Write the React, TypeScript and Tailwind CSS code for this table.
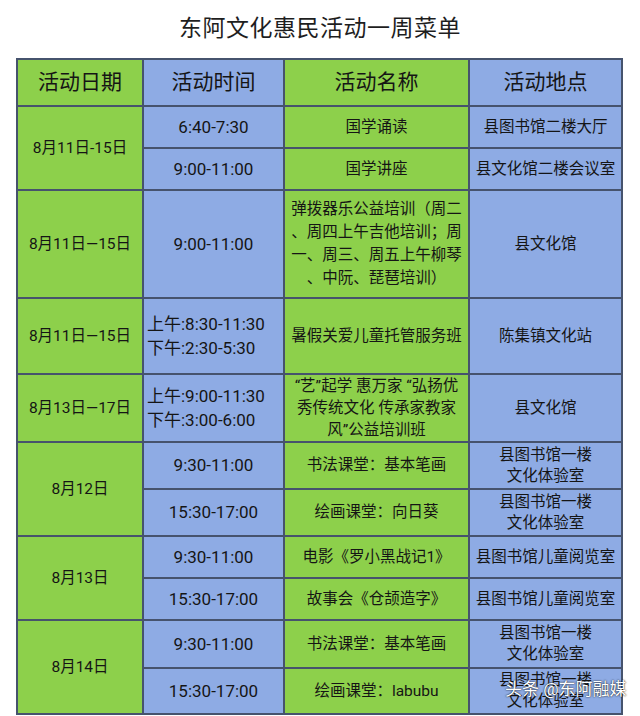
import React from "react";

const G = "bg-[#8dd04b]";
const B = "bg-[#8eabe4]";
const cell = "border-[2px] border-[#46536d] text-center align-middle p-0 text-[15.5px] leading-[23px] text-[#151515]";
const time = "text-[17px]";

function Lines({ lines }: { lines: string[] }) {
  return (
    <>
      {lines.map((l, i) => (
        <span key={i} className="block whitespace-nowrap">
          {l}
        </span>
      ))}
    </>
  );
}

export default function App() {
  return (
    <div
      className="relative w-[640px] h-[716px] bg-white overflow-hidden"
      style={{ fontFamily: "Roboto, 'Noto Sans CJK SC', sans-serif" }}
    >
      <div className="h-[58px] flex items-center justify-center pb-[2px]">
        <h1 className="text-[23px] leading-none text-[#1e1e1e] font-normal tracking-[0.5px]">
          东阿文化惠民活动一周菜单
        </h1>
      </div>
      <table className="ml-[16px] w-[605px] table-fixed border-collapse">
        <colgroup>
          <col className="w-[126px]" />
          <col className="w-[141px]" />
          <col className="w-[185px]" />
          <col className="w-[153px]" />
        </colgroup>
        <tbody>
          <tr className="h-[47px]">
            <td className={`${cell} ${G} !text-[21px]`}>活动日期</td>
            <td className={`${cell} ${B} !text-[21px]`}>活动时间</td>
            <td className={`${cell} ${G} !text-[21px]`}>活动名称</td>
            <td className={`${cell} ${B} !text-[21px]`}>活动地点</td>
          </tr>
          <tr className="h-[42px]">
            <td className={`${cell} ${G}`} rowSpan={2}>8月11日-15日</td>
            <td className={`${cell} ${B} ${time}`}>6:40-7:30</td>
            <td className={`${cell} ${G}`}>国学诵读</td>
            <td className={`${cell} ${B}`}>县图书馆二楼大厅</td>
          </tr>
          <tr className="h-[42px]">
            <td className={`${cell} ${B} ${time}`}>9:00-11:00</td>
            <td className={`${cell} ${G}`}>国学讲座</td>
            <td className={`${cell} ${B}`}>县文化馆二楼会议室</td>
          </tr>
          <tr className="h-[108px]">
            <td className={`${cell} ${G}`}>8月11日—15日</td>
            <td className={`${cell} ${B} ${time}`}>9:00-11:00</td>
            <td className={`${cell} ${G}`}>
              <Lines
                lines={[
                  "弹拨器乐公益培训（周二",
                  "、周四上午吉他培训；周",
                  "一、周三、周五上午柳琴",
                  "、中阮、琵琶培训）",
                ]}
              />
            </td>
            <td className={`${cell} ${B}`}>县文化馆</td>
          </tr>
          <tr className="h-[76px]">
            <td className={`${cell} ${G}`}>8月11日—15日</td>
            <td className={`${cell} ${B} !text-left pl-[3px] ${time} !leading-[24px]`}>
              <Lines lines={["上午:8:30-11:30", "下午:2:30-5:30"]} />
            </td>
            <td className={`${cell} ${G}`}>暑假关爱儿童托管服务班</td>
            <td className={`${cell} ${B}`}>陈集镇文化站</td>
          </tr>
          <tr className="h-[68px]">
            <td className={`${cell} ${G}`}>8月13日—17日</td>
            <td className={`${cell} ${B} !text-left pl-[3px] ${time} !leading-[24px]`}>
              <Lines lines={["上午:9:00-11:30", "下午:3:00-6:00"]} />
            </td>
            <td className={`${cell} ${G} !leading-[22px]`}>
              <Lines lines={["“艺”起学 惠万家 “弘扬优", "秀传统文化 传承家教家", "风”公益培训班"]} />
            </td>
            <td className={`${cell} ${B}`}>县文化馆</td>
          </tr>
          <tr className="h-[47px]">
            <td className={`${cell} ${G}`} rowSpan={2}>8月12日</td>
            <td className={`${cell} ${B} ${time}`}>9:30-11:00</td>
            <td className={`${cell} ${G}`}>书法课堂：基本笔画</td>
            <td className={`${cell} ${B} !leading-[21px]`}>
              <Lines lines={["县图书馆一楼", "文化体验室"]} />
            </td>
          </tr>
          <tr className="h-[47px]">
            <td className={`${cell} ${B} ${time}`}>15:30-17:00</td>
            <td className={`${cell} ${G}`}>绘画课堂：向日葵</td>
            <td className={`${cell} ${B} !leading-[21px]`}>
              <Lines lines={["县图书馆一楼", "文化体验室"]} />
            </td>
          </tr>
          <tr className="h-[42px]">
            <td className={`${cell} ${G}`} rowSpan={2}>8月13日</td>
            <td className={`${cell} ${B} ${time}`}>9:30-11:00</td>
            <td className={`${cell} ${G}`}>电影《罗小黑战记1》</td>
            <td className={`${cell} ${B}`}>县图书馆儿童阅览室</td>
          </tr>
          <tr className="h-[42px]">
            <td className={`${cell} ${B} ${time}`}>15:30-17:00</td>
            <td className={`${cell} ${G}`}>故事会《仓颉造字》</td>
            <td className={`${cell} ${B}`}>县图书馆儿童阅览室</td>
          </tr>
          <tr className="h-[48px]">
            <td className={`${cell} ${G}`} rowSpan={2}>8月14日</td>
            <td className={`${cell} ${B} ${time}`}>9:30-11:00</td>
            <td className={`${cell} ${G}`}>书法课堂：基本笔画</td>
            <td className={`${cell} ${B} !leading-[21px]`}>
              <Lines lines={["县图书馆一楼", "文化体验室"]} />
            </td>
          </tr>
          <tr className="h-[46px]">
            <td className={`${cell} ${B} ${time}`}>15:30-17:00</td>
            <td className={`${cell} ${G}`}>绘画课堂：labubu</td>
            <td className={`${cell} ${B} !leading-[21px]`}>
              <Lines lines={["县图书馆一楼", "文化体验室"]} />
            </td>
          </tr>
        </tbody>
      </table>
      <div
        className="absolute left-[505px] top-[681px] text-[17px] leading-none text-white whitespace-nowrap"
        style={{ textShadow: "0 0 2px rgba(0,0,0,0.75), 0 0 1px rgba(0,0,0,0.6)" }}
      >
        头条 @东阿融媒
      </div>
    </div>
  );
}
